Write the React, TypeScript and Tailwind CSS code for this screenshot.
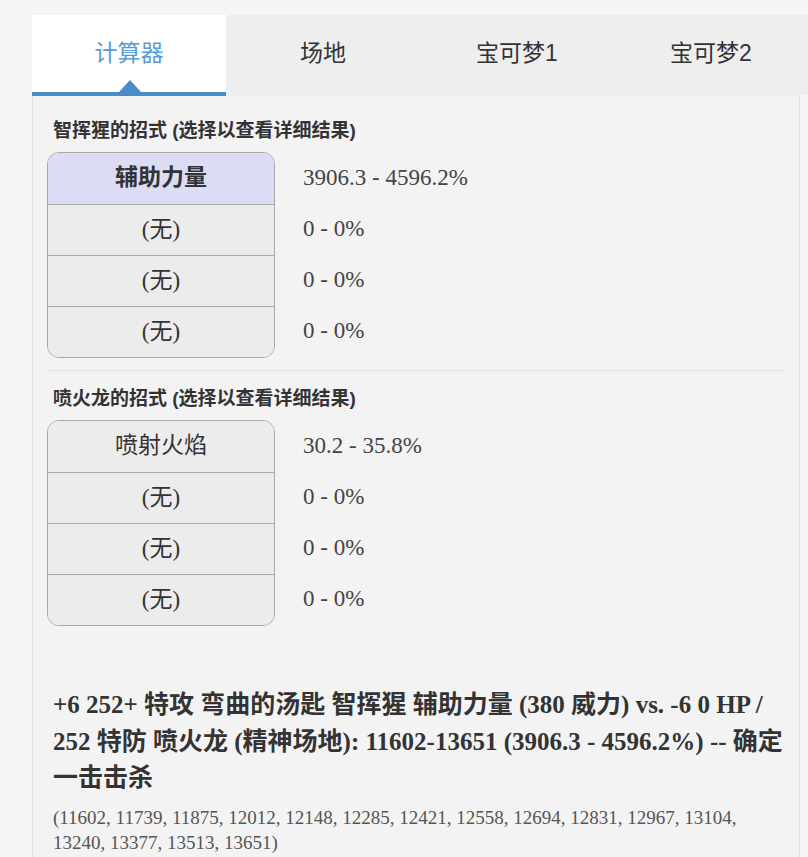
import React from 'react';

const tabs = ['计算器', '场地', '宝可梦1', '宝可梦2'];

type Move = { name: string; pct: string };

const attackerMoves: Move[] = [
  { name: '辅助力量', pct: '3906.3 - 4596.2%' },
  { name: '(无)', pct: '0 - 0%' },
  { name: '(无)', pct: '0 - 0%' },
  { name: '(无)', pct: '0 - 0%' },
];

const defenderMoves: Move[] = [
  { name: '喷射火焰', pct: '30.2 - 35.8%' },
  { name: '(无)', pct: '0 - 0%' },
  { name: '(无)', pct: '0 - 0%' },
  { name: '(无)', pct: '0 - 0%' },
];

const sans = "font-['Liberation_Sans','Noto_Sans_CJK_SC',sans-serif]";
const serif = "font-['Liberation_Serif','Noto_Sans_CJK_SC',serif]";

function MoveTable({ moves, selected }: { moves: Move[]; selected?: number }) {
  return (
    <div className="flex items-stretch">
      <div className="w-[228px] rounded-[12px] border-[1.5px] border-[#a9a9a9] overflow-hidden">
        {moves.map((m, i) => (
          <div
            key={i}
            className={
              'h-[51px] flex items-center justify-center text-[23px] text-[#333] ' +
              serif +
              (i > 0 ? ' border-t-[1.5px] border-[#a9a9a9]' : '') +
              (i === selected ? ' bg-[#dcdcf4] font-bold text-[#222]' : ' bg-[#ececec]')
            }
          >
            {m.name}
          </div>
        ))}
      </div>
      <div className="flex flex-col pl-[28px] pt-[1px]">
        {moves.map((m, i) => (
          <div key={i} className={'h-[51px] flex items-center text-[23px] text-[#444] ' + serif}>
            {m.pct}
          </div>
        ))}
      </div>
    </div>
  );
}

export default function App() {
  const rolls =
    '(11602, 11739, 11875, 12012, 12148, 12285, 12421, 12558, 12694, 12831, 12967, 13104, 13240, 13377, 13513, 13651)';

  return (
    <div className="min-h-[857px] bg-[#f5f5f5] pt-[15px] pl-8 overflow-hidden">
      {/* tabs */}
      <div className="flex h-[80px] bg-[#eeeeee]">
        {tabs.map((t, i) => (
          <div
            key={t}
            className={
              'relative w-[194px] flex items-center justify-center text-[23px] ' +
              sans +
              (i === 0 ? ' bg-white text-[#5b9bd0]' : ' text-[#333]')
            }
          >
            <span className="-mt-[4px]">{t}</span>
            {i === 0 && (
              <>
                <div className="absolute left-0 right-0 bottom-[-1px] h-[4px] bg-[#4a8cc6]" />
                <svg
                  className="absolute bottom-[3px] left-[87px]"
                  width="22"
                  height="12"
                  viewBox="0 0 22 12"
                >
                  <polygon points="11,0 22,12 0,12" fill="#4a8cc6" />
                </svg>
              </>
            )}
          </div>
        ))}
      </div>

      {/* panel */}
      <div className="mr-[8px] border-l border-r border-[#e0e0e0] bg-[#f3f3f3] pl-[14px] pr-[14px] pt-[24px] pb-6">
        <div className={'h-6 leading-6 pl-[6px] text-[19px] font-bold text-[#333] ' + sans}>
          智挥猩的招式 (选择以查看详细结果)
        </div>
        <div className="mt-[9px]">
          <MoveTable moves={attackerMoves} selected={0} />
        </div>

        <div className="mt-[12px] h-px bg-[#e3e3e3]" />

        <div className={'mt-[16px] h-6 leading-6 pl-[6px] text-[19px] font-bold text-[#333] ' + sans}>
          喷火龙的招式 (选择以查看详细结果)
        </div>
        <div className="mt-[9px]">
          <MoveTable moves={defenderMoves} />
        </div>

        <div className={'mt-[61px] pl-[6px] -mr-[3px] text-[25px] leading-[36.5px] font-bold text-[#333] ' + serif}>
          +6 252+ 特攻 弯曲的汤匙 智挥猩 辅助力量 (380 威力) vs. -6 0 HP / 252 特防 喷火龙 (精神场地): 11602-13651 (3906.3 - 4596.2%) -- 确定一击击杀
        </div>
        <div className={'mt-[8px] pl-[6px] text-[19px] leading-[25px] text-[#555] ' + serif}>
          {rolls}
        </div>
      </div>
    </div>
  );
}
